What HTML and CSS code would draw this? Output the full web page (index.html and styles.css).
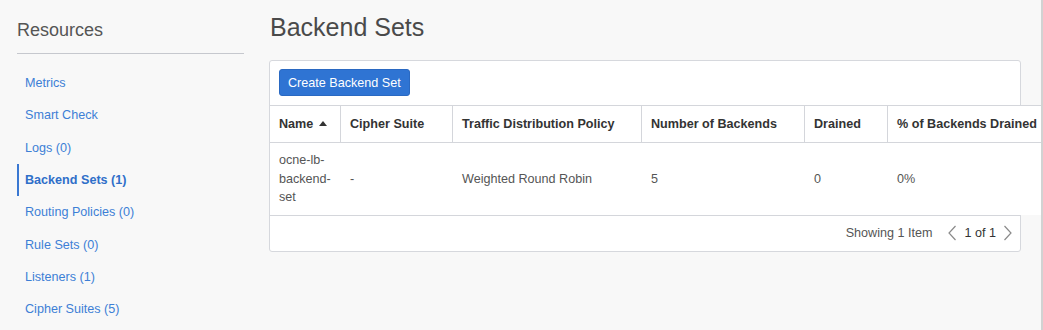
FILE: index.html
```html
<!DOCTYPE html>
<html lang="en">
<head>
<meta charset="utf-8">
<title>Backend Sets</title>
<link rel="stylesheet" href="styles.css">
</head>
<body>
<div class="page">
  <aside class="sidebar">
    <h2 class="side-title">Resources</h2>
    <nav class="side-nav">
      <a class="nav-item">Metrics</a>
      <a class="nav-item">Smart Check</a>
      <a class="nav-item">Logs (0)</a>
      <a class="nav-item active">Backend Sets (1)</a>
      <a class="nav-item">Routing Policies (0)</a>
      <a class="nav-item">Rule Sets (0)</a>
      <a class="nav-item">Listeners (1)</a>
      <a class="nav-item">Cipher Suites (5)</a>
    </nav>
  </aside>
  <main class="main">
    <h1 class="page-title">Backend Sets</h1>
    <section class="panel">
      <div class="toolbar">
        <button class="btn-primary" type="button">Create Backend Set</button>
      </div>
      <table class="grid">
        <colgroup>
          <col class="c1"><col class="c2"><col class="c3"><col class="c4"><col class="c5"><col class="c6">
        </colgroup>
        <thead>
          <tr>
            <th>Name <span class="sort-up"></span></th>
            <th>Cipher Suite</th>
            <th>Traffic Distribution Policy</th>
            <th>Number of Backends</th>
            <th>Drained</th>
            <th>% of Backends Drained</th>
          </tr>
        </thead>
        <tbody>
          <tr>
            <td>ocne-lb-backend-set</td>
            <td>-</td>
            <td>Weighted Round Robin</td>
            <td>5</td>
            <td>0</td>
            <td>0%</td>
          </tr>
        </tbody>
      </table>
      <div class="footer">
        <span class="count">Showing 1 Item</span>
        <span class="pager">
          <svg class="chev" width="10" height="16" viewBox="0 0 10 16"><path d="M8.5 1 L2 8 L8.5 15" fill="none" stroke="#8a8a8a" stroke-width="1.2"/></svg>
          <span class="page-num">1 of 1</span>
          <svg class="chev" width="10" height="16" viewBox="0 0 10 16"><path d="M1.5 1 L8 8 L1.5 15" fill="none" stroke="#8a8a8a" stroke-width="1.2"/></svg>
        </span>
      </div>
    </section>
  </main>
</div>
</body>
</html>
```
FILE: styles.css
```css
* { box-sizing: border-box; }
html, body { margin: 0; padding: 0; }
body {
  background: #f8f8f8;
  font-family: "Liberation Sans", Arial, sans-serif;
  font-size: 12.6px;
  color: #555;
}
.page {
  display: flex;
  width: 1043px;
  height: 330px;
  overflow: hidden;
  border-right: 2px solid #d2d2d2;
}
.sidebar {
  width: 227px;
  margin-left: 17px;
  margin-right: 25px;
  flex: none;
}
.side-title {
  margin: 20px 0 0;
  font-size: 18px;
  line-height: 20px;
  font-weight: normal;
  color: #555;
  padding-bottom: 13px;
  border-bottom: 1px solid #c6c8ce;
}
.side-nav {
  display: flex;
  flex-direction: column;
  margin-top: 13px;
}
.nav-item {
  height: 32.33px;
  display: flex;
  align-items: center;
  padding-left: 6px;
  border-left: 2px solid transparent;
  color: #3d7fd6;
  font-size: 12.6px;
  text-decoration: none;
}
.nav-item.active {
  border-left-color: #3a78d2;
  font-weight: bold;
  color: #2f6fc9;
}
.main {
  width: 772px;
  flex: none;
}
.page-title {
  margin: 12px 0 0 1px;
  font-size: 25px;
  line-height: 30px;
  font-weight: normal;
  color: #4a4a4a;
}
.panel {
  margin-top: 18px;
  width: 752px;
  background: #fff;
  border: 1px solid #d6d8dd;
  border-radius: 3px;
}
.toolbar {
  padding: 8px 9px 9px;
}
.btn-primary {
  display: block;
  height: 27px;
  padding: 0 8px;
  background: #2f74d3;
  border: 1px solid #2a69c2;
  border-radius: 3px;
  color: #fff;
  font-family: "Liberation Sans", Arial, sans-serif;
  font-size: 12.6px;
}
.grid {
  width: 772px;
  table-layout: fixed;
  border-collapse: separate;
  border-spacing: 0;
  background: #fff;
}
.c1 { width: 70px; }
.c2 { width: 112px; }
.c3 { width: 189px; }
.c4 { width: 163px; }
.c5 { width: 83px; }
.c6 { width: 155px; }
.grid th {
  height: 38px;
  padding: 0 9px;
  text-align: left;
  font-weight: bold;
  color: #333;
  white-space: nowrap;
  border-top: 1px solid #d4d6db;
  border-bottom: 1px solid #d4d6db;
  border-left: 1px solid #d4d6db;
}
.grid th:first-child { border-left: 0; }
.grid td {
  padding: 8px 9px;
  line-height: 18.5px;
  color: #555;
  vertical-align: middle;
}
.grid td:not(:first-child) { padding-left: 10px; }
.sort-up {
  display: inline-block;
  margin-left: 2px;
  width: 0;
  height: 0;
  border-left: 4px solid transparent;
  border-right: 4px solid transparent;
  border-bottom: 5px solid #333;
  vertical-align: 2px;
}
.footer {
  height: 36px;
  border-top: 1px solid #d4d6db;
  display: flex;
  align-items: center;
  justify-content: flex-end;
  padding-right: 7px;
  color: #555;
}
.pager {
  display: flex;
  align-items: center;
  margin-left: 15px;
  color: #333;
}
.page-num { margin: 0 7px; }
.chev { display: block; }
```
